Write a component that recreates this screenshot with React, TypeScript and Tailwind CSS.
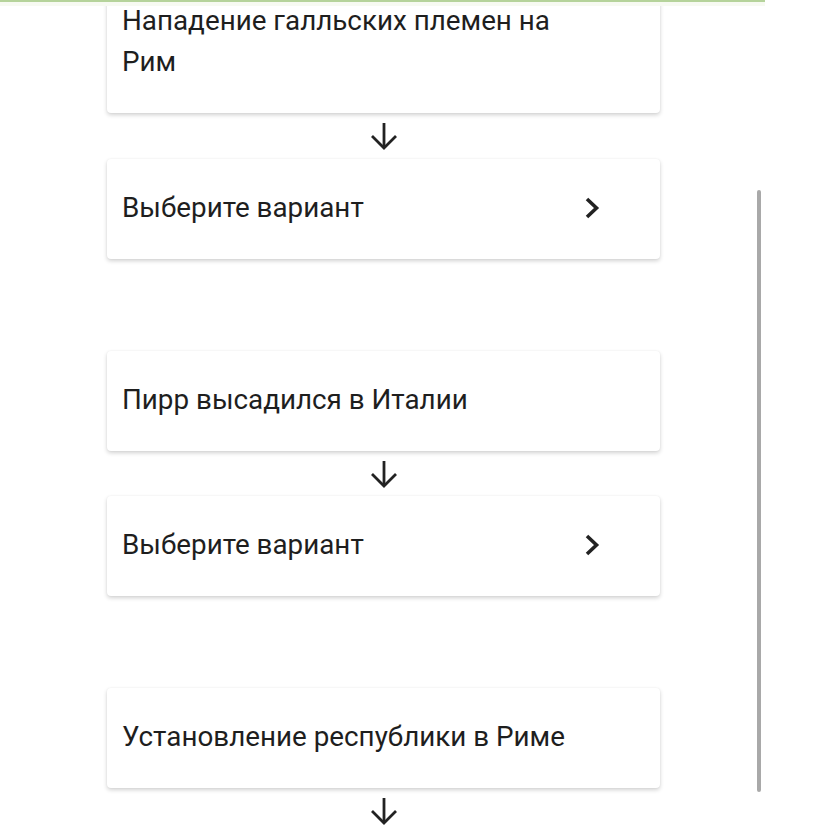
import React from "react";

function ArrowDown() {
  return (
    <svg width="30" height="30" viewBox="0 0 30 30" fill="none" stroke="#222" strokeWidth="2.8" strokeLinecap="butt" strokeLinejoin="miter">
      <line x1="15" y1="2" x2="15" y2="27" />
      <polyline points="3,15 15,27 27,15" />
    </svg>
  );
}

function Chevron() {
  return (
    <svg width="16" height="24" viewBox="0 0 16 24" fill="none" stroke="#222" strokeWidth="3.6" strokeLinecap="butt" strokeLinejoin="miter">
      <polyline points="3,3 12.5,12 3,21" />
    </svg>
  );
}

function Card({ children, select }: { children: React.ReactNode; select?: boolean }) {
  return (
    <div className="ml-[107px] w-[553px] bg-white rounded-[4px] shadow-[0_2px_4px_rgba(0,0,0,0.18),0_0_2px_rgba(0,0,0,0.06)] pl-[15px] pr-[60px] pt-[28px] pb-[31px] flex items-center justify-between">
      <div className="text-[27.8px] leading-[41px] text-[#1e1e1e]">{children}</div>
      {select && <Chevron />}
    </div>
  );
}

function Arrow({ h }: { h: string }) {
  return (
    <div className={`ml-[107px] w-[553px] flex justify-center items-center ${h}`}>
      <ArrowDown />
    </div>
  );
}

export default function App() {
  return (
    <div className="relative w-[828px] h-[828px] overflow-hidden bg-white" style={{ fontFamily: "Roboto, 'Noto Sans', sans-serif" }}>
      <div className="flex flex-col mt-[-28px]">
        <Card>
          Нападение галльских племен на
          <br />
          Рим
        </Card>
        <Arrow h="h-[46px]" />
        <Card select>Выберите вариант</Card>
        <div className="h-[92px]" />
        <Card>Пирр высадился в Италии</Card>
        <Arrow h="h-[45px]" />
        <Card select>Выберите вариант</Card>
        <div className="h-[92px]" />
        <Card>Установление республики в Риме</Card>
        <Arrow h="h-[46px]" />
      </div>
      <div className="absolute left-0 top-0 w-[765px] h-[2px] bg-[#b5d39b]" />
      <div className="absolute left-0 top-[2px] w-[765px] h-[4px] bg-[#f7faf2]" />
      <div className="absolute left-[757px] top-[190px] w-[4px] h-[602px] rounded-full bg-[#a9a9a9]" />
    </div>
  );
}
